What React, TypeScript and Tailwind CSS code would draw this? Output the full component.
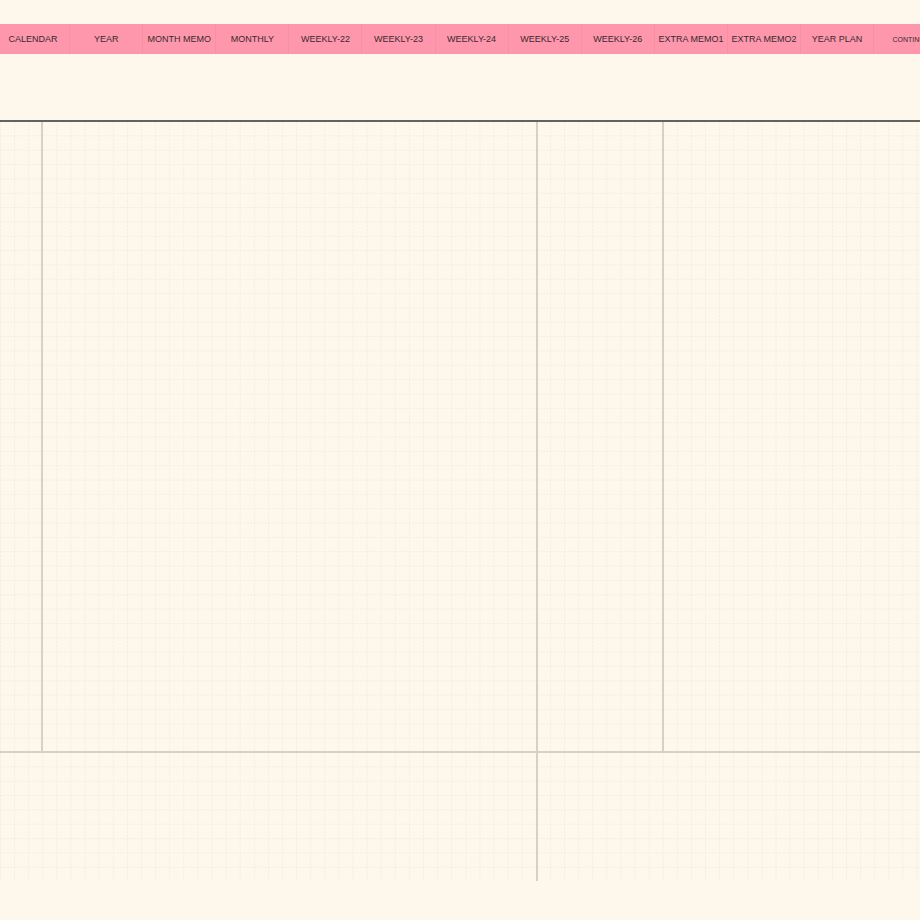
import React from "react";

const tabs = [
  "CALENDAR",
  "YEAR",
  "MONTH MEMO",
  "MONTHLY",
  "WEEKLY-22",
  "WEEKLY-23",
  "WEEKLY-24",
  "WEEKLY-25",
  "WEEKLY-26",
  "EXTRA MEMO1",
  "EXTRA MEMO2",
  "YEAR PLAN",
];

// dashed graph-paper texture drawn behind the planner boxes
function GridPaper() {
  return (
    <svg className="absolute inset-0 w-full h-full" aria-hidden="true">
      <defs>
        <pattern id="paper" width="14.1" height="14.34" patternUnits="userSpaceOnUse" y="-1">
          <line x1="0" y1="0" x2="14.1" y2="0" stroke="#ebe3d5" strokeWidth="1" strokeDasharray="2.4 1.2" />
          <line x1="0" y1="0" x2="0" y2="14.34" stroke="#ebe3d5" strokeWidth="1" strokeDasharray="2.4 1.2" />
        </pattern>
      </defs>
      <rect width="100%" height="100%" fill="url(#paper)" />
    </svg>
  );
}

export default function App() {
  return (
    <div className="w-[920px] h-[920px] overflow-hidden bg-[#fef7ec] pt-[24px] font-['Liberation_Sans',Arial,sans-serif]">
      <nav className="flex h-[30px] bg-[#fe97ab] ml-[-3px] w-max">
        {tabs.map((t) => (
          <div
            key={t}
            className="w-[73.1px] shrink-0 flex items-center justify-center pt-[2px] border-r border-[#f590a5] text-[9px] text-[#382a2f] whitespace-nowrap"
          >
            {t}
          </div>
        ))}
        <div className="w-[73.1px] shrink-0 flex items-center justify-center pt-[2px] text-[7px] text-[#382a2f] whitespace-nowrap">
          CONTINUE
        </div>
      </nav>

      <div className="h-[66px]" />

      <div className="border-t-2 border-[#626262]">
        <div className="relative h-[759px]">
          <GridPaper />
          <div className="relative flex flex-col h-full">
            <div className="flex h-[631px] border-b-2 border-[#d6d0c7]">
              <div className="w-[43px] shrink-0 border-r-2 border-[#d6d0c7]" />
              <div className="w-[495px] shrink-0 border-r-2 border-[#d6d0c7]" />
              <div className="w-[126px] shrink-0 border-r-2 border-[#d6d0c7]" />
              <div className="flex-1" />
            </div>
            <div className="flex flex-1">
              <div className="w-[538px] shrink-0 border-r-2 border-[#d6d0c7]" />
              <div className="flex-1" />
            </div>
          </div>
        </div>
      </div>
    </div>
  );
}
